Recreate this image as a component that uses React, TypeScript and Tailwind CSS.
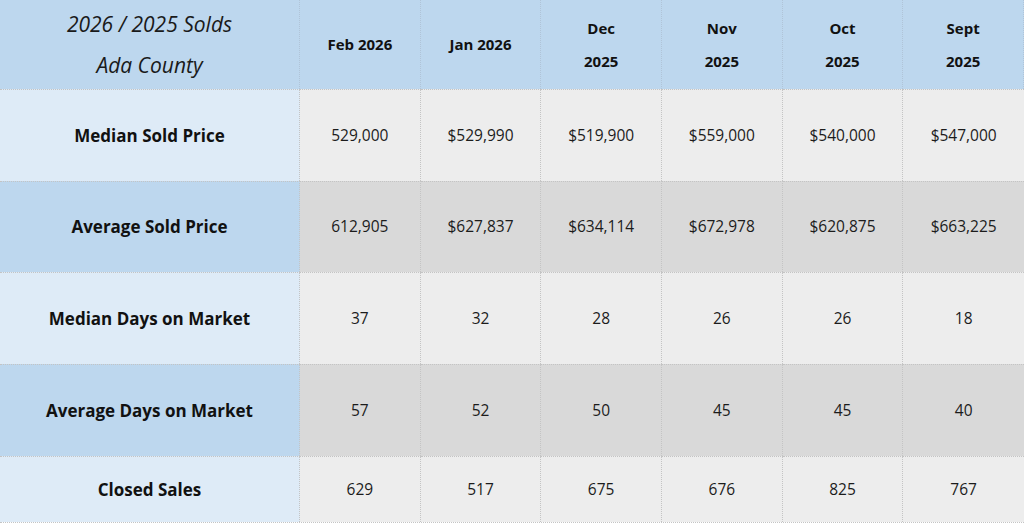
// Ada County solds comparison table
const months = [
  { top: "Feb 2026" },
  { top: "Jan 2026" },
  { top: "Dec", bottom: "2025" },
  { top: "Nov", bottom: "2025" },
  { top: "Oct", bottom: "2025" },
  { top: "Sept", bottom: "2025" },
];

const rows = [
  { label: "Median Sold Price", values: ["529,000", "$529,990", "$519,900", "$559,000", "$540,000", "$547,000"], dark: false, h: "h-[92px]" },
  { label: "Average Sold Price", values: ["612,905", "$627,837", "$634,114", "$672,978", "$620,875", "$663,225"], dark: true, h: "h-[91px]" },
  { label: "Median Days on Market", values: ["37", "32", "28", "26", "26", "18"], dark: false, h: "h-[92px]" },
  { label: "Average Days on Market", values: ["57", "52", "50", "45", "45", "40"], dark: true, h: "h-[92px]" },
  { label: "Closed Sales", values: ["629", "517", "675", "676", "825", "767"], dark: false, h: "h-[66px]" },
];

export default function App() {
  return (
    <div
      className="w-[1024px] h-[524px] bg-white text-[#111] overflow-hidden"
      style={{ fontFamily: '"Open Sans", "Noto Sans", sans-serif' }}
    >
      <div className="grid grid-cols-[300px_repeat(6,1fr)] border-b border-dotted border-[#c4c4c4]">
        {/* Header */}
        <div className="h-[89px] bg-[#bdd7ee] border-r border-dotted border-[#b0c4d8] flex flex-col items-center justify-center italic text-[21px] leading-[41px] text-[#1a1a1a]">
          <span>2026 / 2025 Solds</span>
          <span>Ada County</span>
        </div>
        {months.map((m) => (
          <div
            key={m.top}
            className="h-[89px] bg-[#bdd7ee] border-r border-dotted border-[#b0c4d8] last:border-r-0 flex flex-col items-center justify-center font-bold text-[15px] leading-[33px]"
          >
            <span>{m.top}</span>
            {m.bottom && <span>{m.bottom}</span>}
          </div>
        ))}

        {/* Body rows */}
        {rows.map((r) => (
          <div key={r.label} className="contents">
            <div
              className={`${r.h} ${r.dark ? "bg-[#bdd7ee]" : "bg-[#deebf7]"} border-t border-r border-dotted border-[#c4c4c4] flex items-center justify-center font-bold text-[17px]`}
            >
              {r.label}
            </div>
            {r.values.map((v, i) => (
              <div
                key={i}
                className={`${r.h} ${r.dark ? "bg-[#d9d9d9]" : "bg-[#ededed]"} border-t border-r border-dotted border-[#c4c4c4] last:border-r-0 flex items-center justify-center text-[15.5px] text-[#1c1c1c]`}
              >
                {v}
              </div>
            ))}
          </div>
        ))}
      </div>
    </div>
  );
}
